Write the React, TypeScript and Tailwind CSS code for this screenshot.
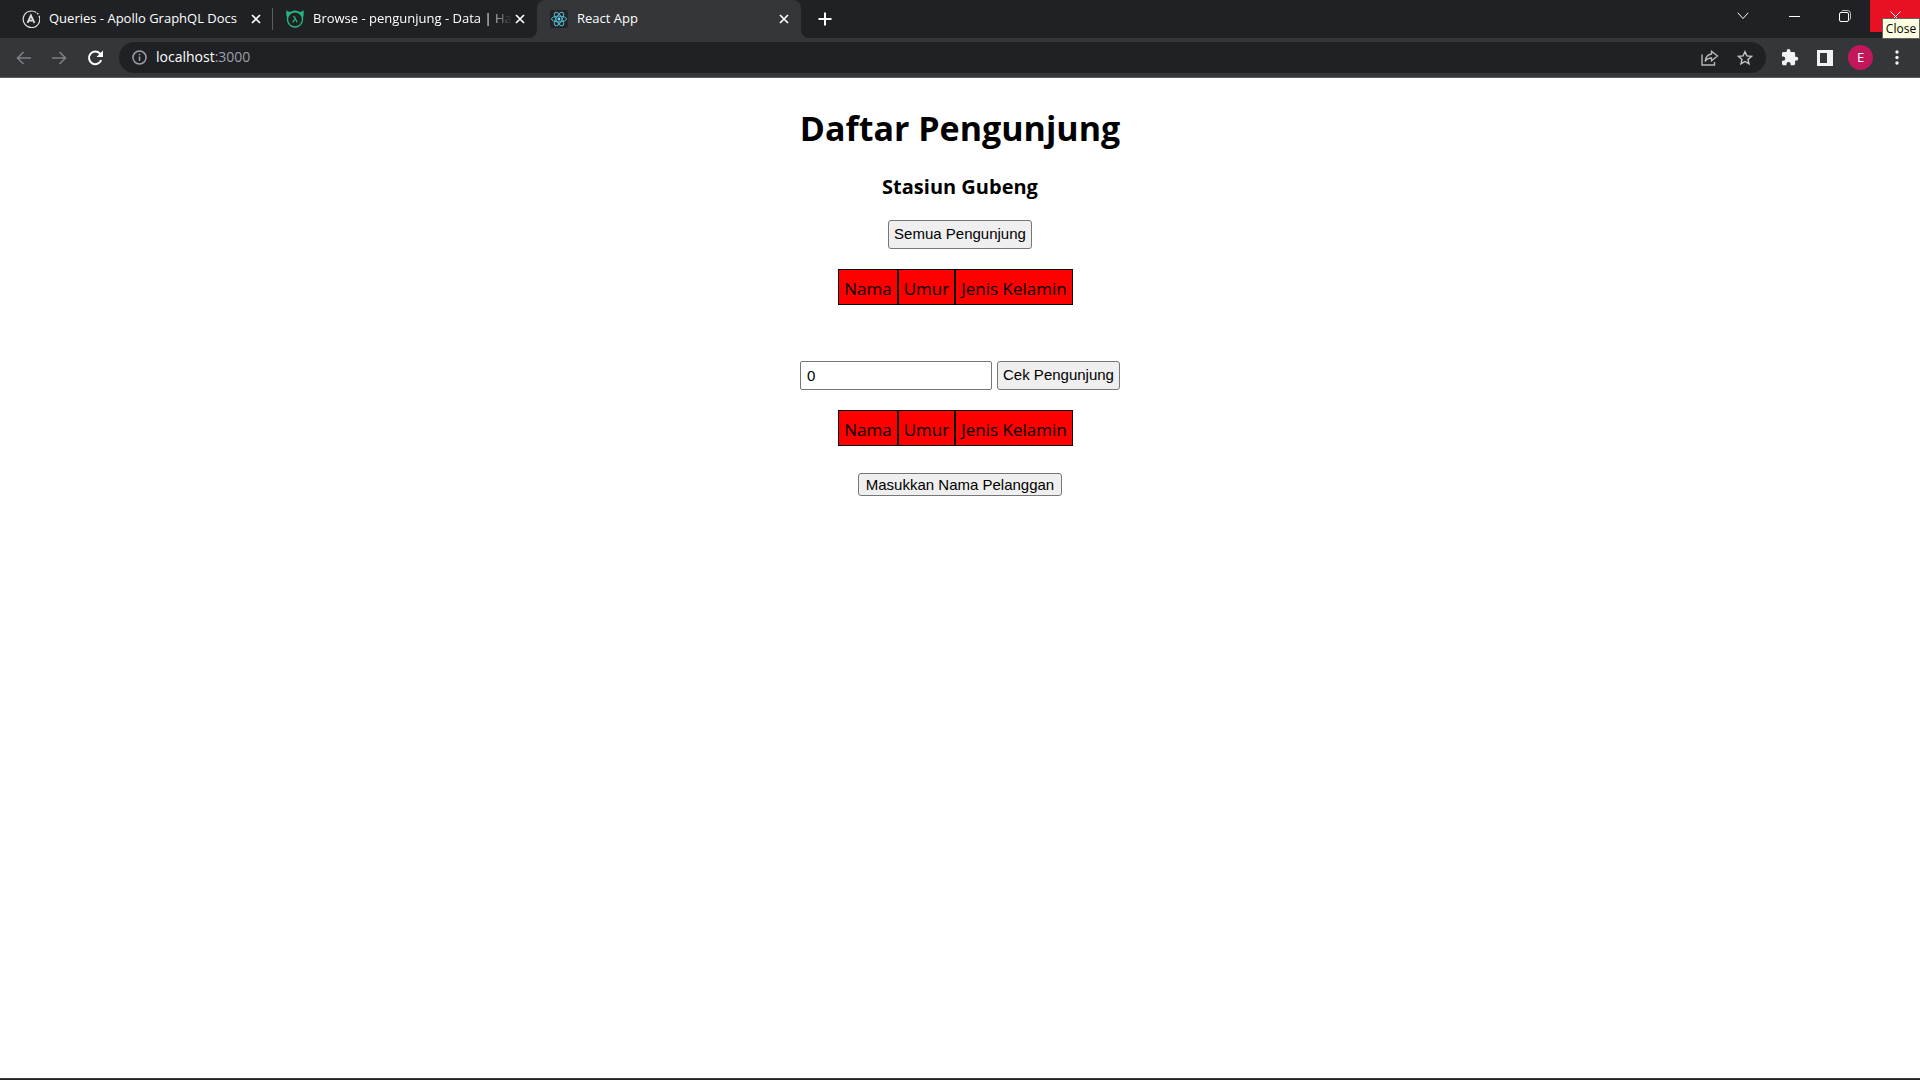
import { useState } from "react";
import type { ReactNode } from "react";

function CloseIcon() {
  return (
    <svg width="10" height="10" viewBox="0 0 10 10" fill="none" stroke="#fff" strokeWidth="1.7" aria-hidden="true">
      <path d="M1 1 9 9M9 1 1 9" />
    </svg>
  );
}

function ApolloIcon() {
  return (
    <svg width="18" height="18" viewBox="0 0 18 18" fill="none" stroke="#e3e3e3" aria-hidden="true">
      <path d="M17 5.8A8.3 8.3 0 1 1 14.2 2.5" strokeWidth="1.2" />
      <circle cx="15.7" cy="3.6" r="0.9" fill="#e3e3e3" stroke="none" />
      <path d="M5.5 12.8 8.9 5.4 12.4 12.8M7.2 10.6H10.2" strokeWidth="1.9" />
    </svg>
  );
}

function HasuraIcon() {
  return (
    <svg width="18" height="18" viewBox="0 0 18 18" fill="none" aria-hidden="true">
      <path
        d="M.6 0C.2 2 0 5 .9 7 .2 13 3.5 17.7 9 17.7S17.8 13 17.1 7c.9-2 .7-5 .3-7-.5 1-1.8 1.9-3.5 2.1A9 9 0 0 0 4.1 2.1C2.4 1.9 1.1 1 .6 0Z"
        fill="#27b67c"
      />
      <circle cx="9" cy="9.4" r="6.8" fill="#202124" />
      <path d="M7.2 6.8H8.4L11.2 12.3M9.1 9.2 6.8 12.3" stroke="#27b67c" strokeWidth="1.3" />
    </svg>
  );
}

function ReactIcon() {
  return (
    <svg width="18" height="18" viewBox="0 0 18 18" fill="none" stroke="#53b6d2" strokeWidth="1" aria-hidden="true">
      <rect width="18" height="18" rx="2" fill="#222425" stroke="none" />
      <ellipse cx="9" cy="9" rx="7.5" ry="2.9" />
      <ellipse cx="9" cy="9" rx="7.5" ry="2.9" transform="rotate(60 9 9)" />
      <ellipse cx="9" cy="9" rx="7.5" ry="2.9" transform="rotate(120 9 9)" />
      <circle cx="9" cy="9" r="1.4" fill="#6fdcf5" stroke="none" />
    </svg>
  );
}

type TabProps = { title: string; icon: ReactNode; active?: boolean; divider?: boolean; fade?: boolean };

function Tab({ title, icon, active, divider, fade }: TabProps) {
  return (
    <div
      className={
        "relative flex h-full w-[264px] items-center pr-[11px] pl-[13px] " +
        (active ? "rounded-t-lg bg-[#35363a]" : "bg-[#202124]")
      }
    >
      {active && (
        <>
          <span className="absolute bottom-0 -left-2 size-2 bg-[#35363a]">
            <span className="block size-2 rounded-br-lg bg-[#202124]" />
          </span>
          <span className="absolute -right-2 bottom-0 size-2 bg-[#35363a]">
            <span className="block size-2 rounded-bl-lg bg-[#202124]" />
          </span>
        </>
      )}
      <span className="shrink-0">{icon}</span>
      <span
        className={
          "mr-[2px] ml-[9px] min-w-0 flex-1 overflow-hidden pb-[2px] text-[13px] leading-5 whitespace-nowrap text-white " +
          (fade ? "mask-r-from-87% mask-r-to-100%" : "")
        }
      >
        {title}
      </span>
      <button type="button" aria-label={"Close " + title} className="flex size-3 shrink-0 items-center justify-center">
        <CloseIcon />
      </button>
      {divider && <span className="absolute top-2 right-0 h-[22px] w-px bg-[#5b5d61]" />}
    </div>
  );
}

function TabStrip() {
  return (
    <div className="flex h-[38px] bg-[#202124] pl-[9px]">
      <Tab title="Queries - Apollo GraphQL Docs" icon={<ApolloIcon />} divider />
      <Tab title="Browse - pengunjung - Data | Ha" icon={<HasuraIcon />} fade />
      <Tab title="React App" icon={<ReactIcon />} active />
      <button type="button" aria-label="New tab" className="flex w-12 items-center justify-center">
        <svg width="14" height="14" viewBox="0 0 14 14" stroke="#fff" strokeWidth="2" aria-hidden="true">
          <path d="M7 .5V13.5M.5 7H13.5" />
        </svg>
      </button>
      <div className="ml-auto flex h-8">
        <button type="button" aria-label="Search tabs" className="flex w-[52px] items-center justify-center">
          <svg width="12" height="8" viewBox="0 0 12 8" fill="none" stroke="#fff" aria-hidden="true">
            <path d="M.8 .8 6 6.5 11.2 .8" />
          </svg>
        </button>
        <button type="button" aria-label="Minimize" className="flex w-[50px] items-center justify-center">
          <span className="h-px w-[11px] bg-white" />
        </button>
        <button type="button" aria-label="Restore" className="flex w-[51px] items-center justify-center">
          <svg width="12" height="12" viewBox="0 0 12 12" fill="none" stroke="#fff" aria-hidden="true">
            <rect x=".5" y="2.5" width="9" height="9" rx="1.5" />
            <path d="M2.5 1.5Q3 .5 4 .5H8.500Q11.5 .5 11.5 3.500V8.500Q11.5 9.5 10.5 10" strokeOpacity=".7" />
          </svg>
        </button>
        <div className="relative">
          <button type="button" aria-label="Close" className="flex h-8 w-[50px] items-center justify-center bg-[#e81123]">
            <svg width="11" height="11" viewBox="0 0 11 11" stroke="#fff" aria-hidden="true">
              <path d="M.5 .5 10.5 10.5M10.5 .5 .5 10.5" />
            </svg>
          </button>
          <span
            role="tooltip"
            className="absolute top-[18px] right-0 z-10 flex h-[21px] w-[38px] items-center justify-center border border-[#646464] bg-[#ffffe1] text-xs text-black"
          >
            Close
          </span>
        </div>
      </div>
    </div>
  );
}

function Arrow({ back }: { back?: boolean }) {
  return (
    <svg width="16" height="14" viewBox="0 0 16 14" fill="none" stroke="#7e8084" strokeWidth="1.6" aria-hidden="true">
      <path d={back ? "M15 7H1.5M7.5 1 1.5 7 7.5 13" : "M1 7H14.5M8.5 1 14.5 7 8.5 13"} />
    </svg>
  );
}

function Toolbar() {
  return (
    <div className="flex h-10 items-center border-b border-[#5a5b5e] bg-[#35363a] px-4">
      <div className="flex items-center">
        <button type="button" aria-label="Back" className="flex w-[35px]">
          <Arrow back />
        </button>
        <button type="button" aria-label="Forward" className="flex w-[35px]">
          <Arrow />
        </button>
        <button type="button" aria-label="Reload" className="flex w-[33px]">
          <svg width="18" height="18" viewBox="0 0 18 18" fill="none" aria-hidden="true">
            <path d="M15.2 11.2A6.3 6.3 0 1 1 14 4.6L15.4 6" stroke="#fff" strokeWidth="2" />
            <path d="M17 1.5V8H10.5Z" fill="#fff" />
          </svg>
        </button>
      </div>
      <div className="flex h-[31px] min-w-0 flex-1 items-center rounded-full bg-[#202124] px-[13px]">
        <svg width="15" height="15" viewBox="0 0 15 15" fill="none" stroke="#9aa0a6" strokeWidth="1.5" aria-hidden="true">
          <circle cx="7.5" cy="7.5" r="6.5" />
          <path d="M7.5 6.5V11M7.5 3.8V5.3" />
        </svg>
        <a href="http://localhost:3000" className="ml-[9px] pb-px text-[14px] leading-5 text-white">
          localhost<span className="text-[#9aa0a6]">:3000</span>
        </a>
        <div className="ml-auto flex items-center gap-[18px]">
          <button type="button" aria-label="Share">
            <svg width="18" height="16" viewBox="0 0 18 16" fill="none" stroke="#b5b7ba" strokeWidth="1.4" aria-hidden="true">
              <path d="M1 4.5V15H13.5V12" />
              <path d="M10.5 1.2 16.5 6 10.5 10.8V8C7.5 8 5.5 9 4.2 11.5 4.5 7.5 6.5 4.5 10.5 4Z" />
            </svg>
          </button>
          <button type="button" aria-label="Bookmark this tab">
            <svg width="16" height="16" viewBox="0 0 16 16" fill="none" stroke="#c4c6c9" strokeWidth="1.4" aria-hidden="true">
              <path d="M8 1.7 9.9 5.9 14.5 6.3 11 9.4 12 13.9 8 11.5 4 13.9 5 9.4 1.5 6.3 6.1 5.9Z" />
            </svg>
          </button>
        </div>
      </div>
      <div className="ml-4 flex items-center">
        <button type="button" aria-label="Extensions" className="flex w-[35px]">
          <svg width="17" height="17" viewBox="2 1 22 22" fill="#f1f3f4" aria-hidden="true">
            <path d="M20.5 11H19V7c0-1.1-.9-2-2-2h-4V3.500a2.500 2.500 0 0 0-5 0V5H4c-1.1 0-2 .9-2 2v3.800h1.500a2.700 2.700 0 0 1 0 5.400H2V20c0 1.1.9 2 2 2h3.800v-1.500a2.700 2.700 0 0 1 5.400 0V22H17c1.1 0 2-.9 2-2v-4h1.500a2.500 2.500 0 0 0 0-5z" />
          </svg>
        </button>
        <button type="button" aria-label="Side panel" className="flex w-[31px]">
          <svg width="16" height="16" viewBox="0 0 16 16" aria-hidden="true">
            <path d="M0 0H16V16H0ZM3 3V13H10V3Z" fill="#f1f3f4" fillRule="evenodd" />
          </svg>
        </button>
        <button
          type="button"
          aria-label="Profile"
          className="flex size-[25px] items-center justify-center rounded-full bg-[#c2185b] text-[13px] font-medium text-white"
        >
          E
        </button>
        <button type="button" aria-label="Menu" className="ml-4 flex w-[15px] justify-center">
          <svg width="4" height="15" viewBox="0 0 4 15" fill="#f1f3f4" aria-hidden="true">
            <circle cx="2" cy="2" r="1.7" />
            <circle cx="2" cy="7.5" r="1.7" />
            <circle cx="2" cy="13" r="1.7" />
          </svg>
        </button>
      </div>
    </div>
  );
}

function VisitorTable() {
  return (
    <table className="mr-[9px] border-separate border-spacing-0 bg-[#ff0000] text-[17px] leading-6">
      <thead>
        <tr>
          {["Nama", "Umur", "Jenis Kelamin"].map((heading) => (
            <th key={heading} scope="col" className="border border-black px-[5px] pt-[7px] pb-[3px] font-normal">
              {heading}
            </th>
          ))}
        </tr>
      </thead>
    </table>
  );
}

export default function App() {
  const [id, setId] = useState("0");
  return (
    <div className="flex min-h-screen flex-col bg-white font-['Open_Sans','Noto_Sans',sans-serif] text-black">
      <header>
        <TabStrip />
        <Toolbar />
      </header>
      <main className="flex flex-1 flex-col items-center pt-[26px]">
        <h1 className="text-[34px] leading-[48px] font-bold">Daftar Pengunjung</h1>
        <h3 className="mt-[21px] text-[20px] leading-7 font-bold">Stasiun Gubeng</h3>
        <button
          type="button"
          className="mt-[19px] h-[29px] rounded-[3px] border border-[#767676] bg-[#efefef] px-[5px] font-['Liberation_Sans',Arial,sans-serif] text-[15px]"
        >
          Semua Pengunjung
        </button>
        <div className="mt-5">
          <VisitorTable />
        </div>
        <form className="mt-14 flex gap-[5px] font-['Liberation_Sans',Arial,sans-serif] text-[15px]" onSubmit={(e) => e.preventDefault()}>
          <input
            aria-label="ID Pengunjung"
            value={id}
            onChange={(e) => setId(e.target.value)}
            className="h-[29px] w-48 rounded-[2px] border border-[#767676] bg-white px-[6px]"
          />
          <button type="submit" className="h-[29px] rounded-[3px] border border-[#767676] bg-[#efefef] px-[5px]">
            Cek Pengunjung
          </button>
        </form>
        <div className="mt-5">
          <VisitorTable />
        </div>
        <button
          type="button"
          className="mt-[27px] h-[23px] rounded-[3px] border border-[#767676] bg-[#efefef] px-[7px] font-['Liberation_Sans',Arial,sans-serif] text-[15px] leading-5"
        >
          Masukkan Nama Pelanggan
        </button>
      </main>
      <footer className="h-[2px] border-t border-[#3c3c3e] bg-[#202124]" />
    </div>
  );
}
